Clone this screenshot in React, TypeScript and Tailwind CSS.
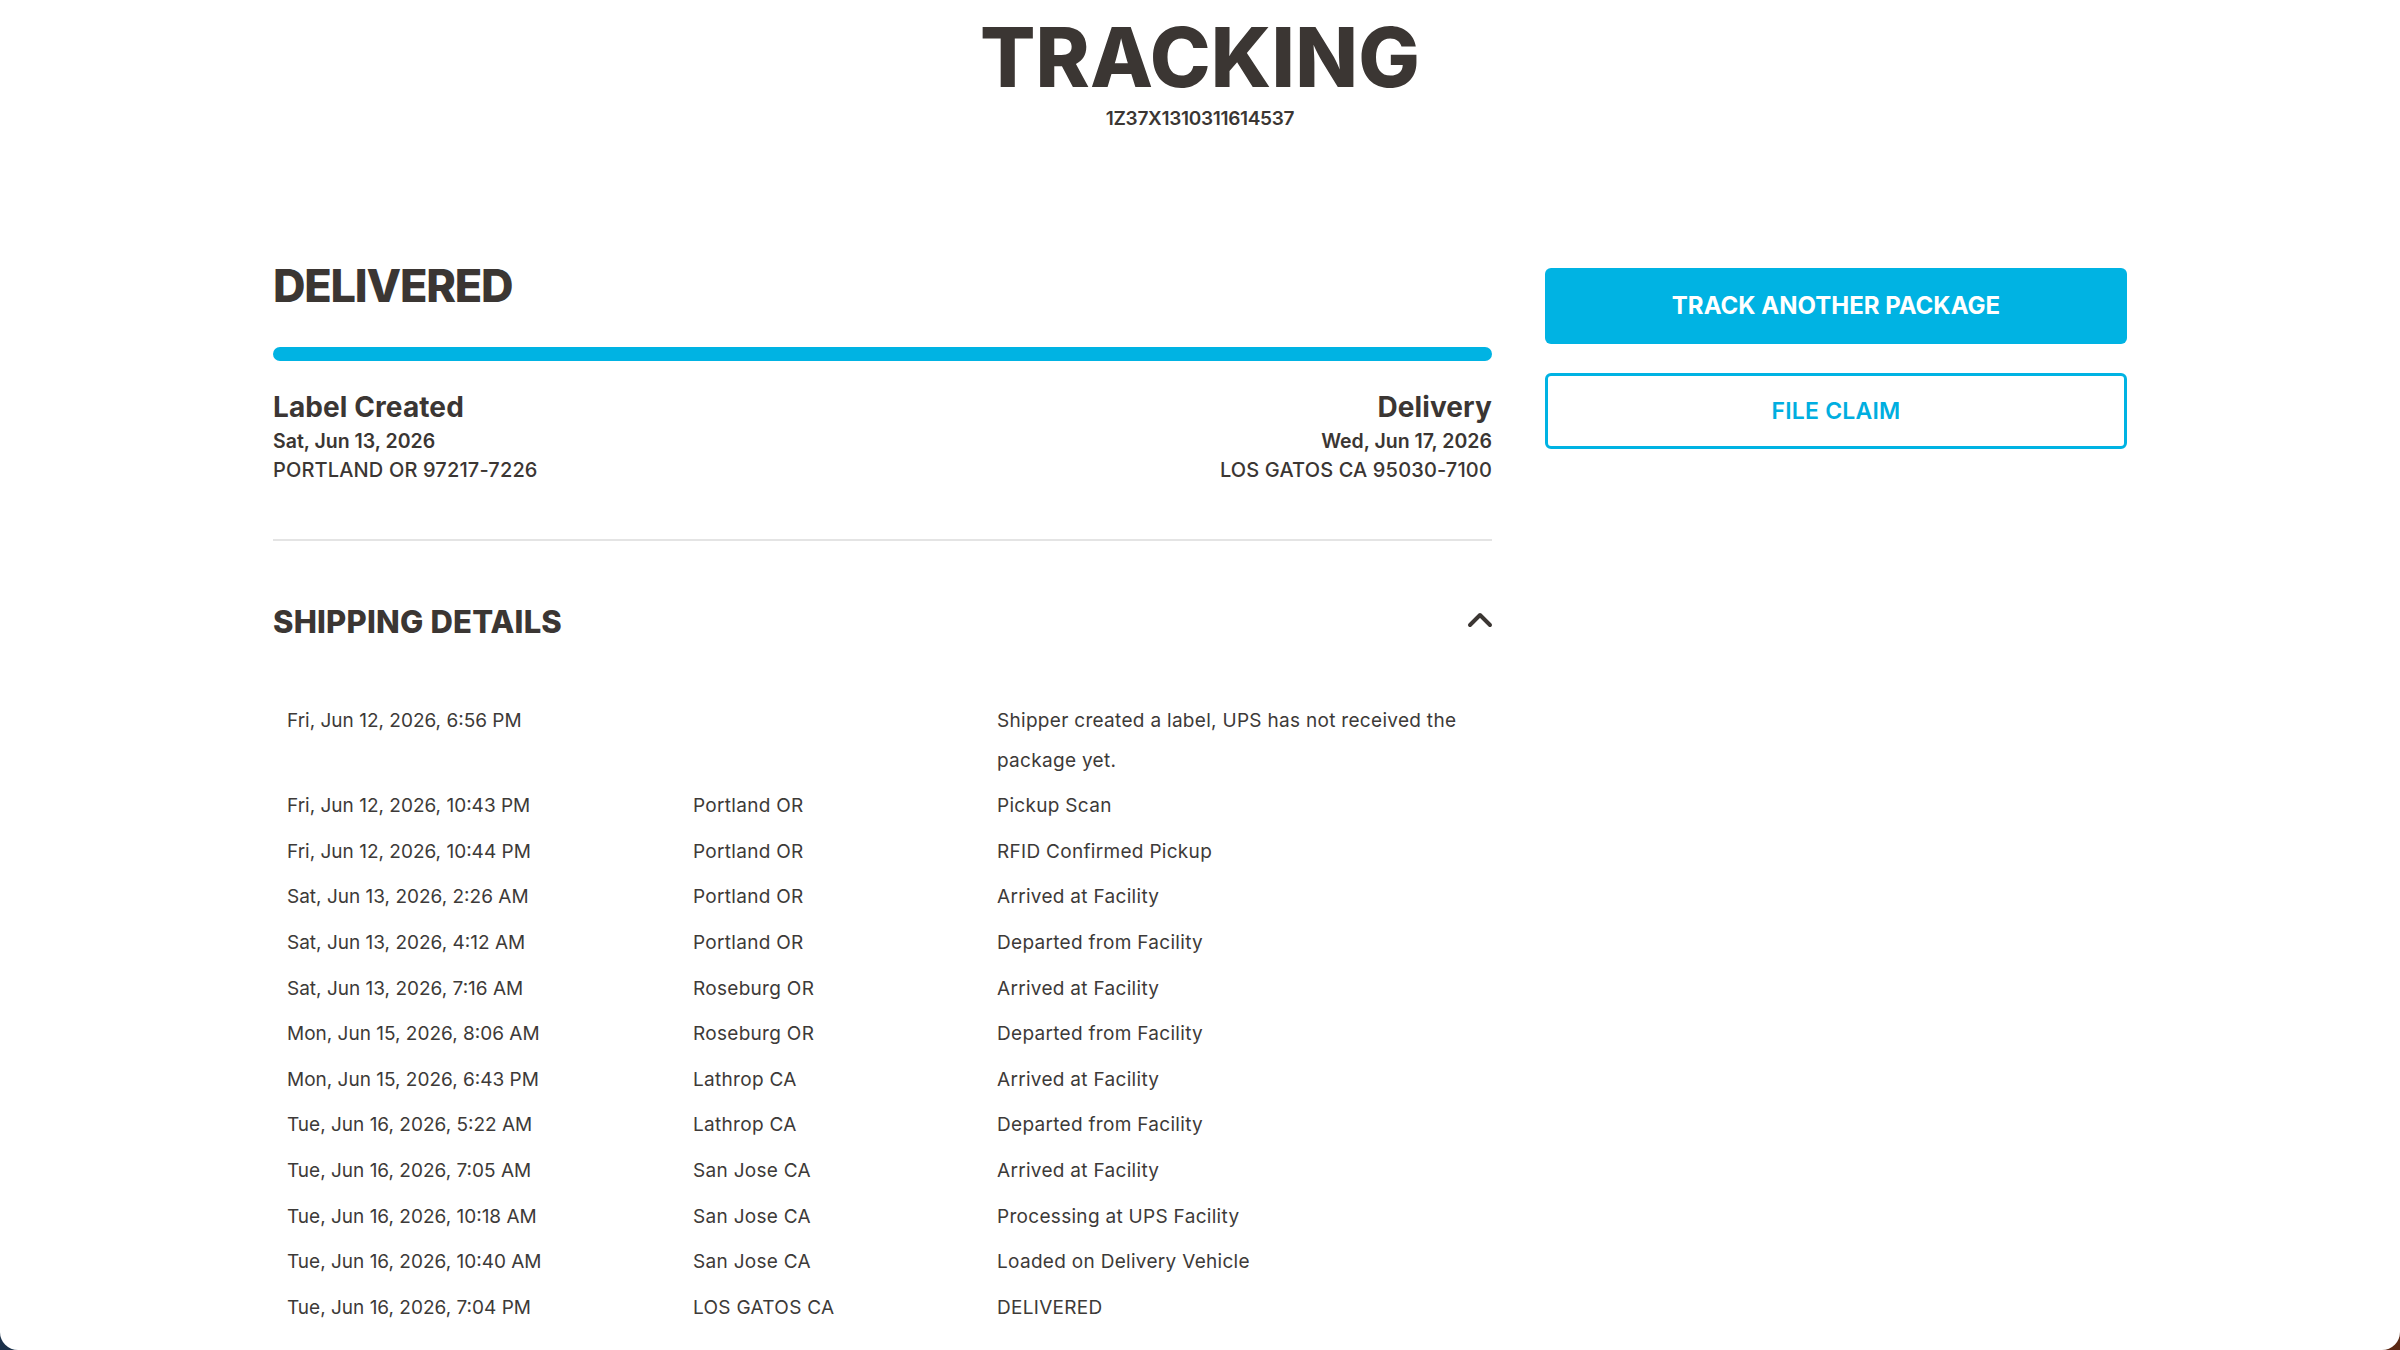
import { ChevronUp } from "lucide-react";

type ActivityRow = {
  date: string;
  location: string;
  status: string;
};

const activity: ActivityRow[] = [
  { date: "Fri, Jun 12, 2026, 6:56 PM", location: "", status: "Shipper created a label, UPS has not received the package yet." },
  { date: "Fri, Jun 12, 2026, 10:43 PM", location: "Portland OR", status: "Pickup Scan" },
  { date: "Fri, Jun 12, 2026, 10:44 PM", location: "Portland OR", status: "RFID Confirmed Pickup" },
  { date: "Sat, Jun 13, 2026, 2:26 AM", location: "Portland OR", status: "Arrived at Facility" },
  { date: "Sat, Jun 13, 2026, 4:12 AM", location: "Portland OR", status: "Departed from Facility" },
  { date: "Sat, Jun 13, 2026, 7:16 AM", location: "Roseburg OR", status: "Arrived at Facility" },
  { date: "Mon, Jun 15, 2026, 8:06 AM", location: "Roseburg OR", status: "Departed from Facility" },
  { date: "Mon, Jun 15, 2026, 6:43 PM", location: "Lathrop CA", status: "Arrived at Facility" },
  { date: "Tue, Jun 16, 2026, 5:22 AM", location: "Lathrop CA", status: "Departed from Facility" },
  { date: "Tue, Jun 16, 2026, 7:05 AM", location: "San Jose CA", status: "Arrived at Facility" },
  { date: "Tue, Jun 16, 2026, 10:18 AM", location: "San Jose CA", status: "Processing at UPS Facility" },
  { date: "Tue, Jun 16, 2026, 10:40 AM", location: "San Jose CA", status: "Loaded on Delivery Vehicle" },
  { date: "Tue, Jun 16, 2026, 7:04 PM", location: "LOS GATOS CA", status: "DELIVERED" },
];

function Milestone({ title, date, place, align }: { title: string; date: string; place: string; align: "left" | "right" }) {
  return (
    <div className={align === "right" ? "text-right" : "text-left"}>
      <div className="text-[28px] font-bold leading-[30px] tracking-[0.1px]">{title}</div>
      <div className="mt-[5px] text-[19.5px] font-semibold leading-[29px]">{date}</div>
      <div className="text-[20px] font-medium leading-[29px] tracking-[0.15px]">{place}</div>
    </div>
  );
}

export default function App() {
  return (
    <div className="bg-gradient-to-r from-[#1b3049] to-[#5b2814]">
      <div
        className="h-[1350px] overflow-hidden rounded-b-[18px] bg-white text-[#3b3633]"
        style={{ fontFamily: "Inter, 'Noto Sans', 'Liberation Sans', sans-serif" }}
      >
        <header className="flex flex-col items-center pt-[18px]">
          <h1 className="text-[82px] font-extrabold uppercase leading-[80px] tracking-[0.2px]">Tracking</h1>
          <div className="mt-[9px] text-[19px] font-semibold leading-[24px] tracking-[-0.3px]">1Z37X1310311614537</div>
        </header>

        <main className="mx-auto mt-[137px] grid w-[1854px] grid-cols-[1219px_582px] gap-x-[53px]">
          <section>
            <h2 className="text-[45px] font-extrabold uppercase leading-[36px] tracking-[-1.2px]">Delivered</h2>
            <div className="mt-[43px] h-[14px] rounded-full bg-[#00b3e3]" />

            <div className="mt-[31px] flex justify-between">
              <Milestone title="Label Created" date="Sat, Jun 13, 2026" place="PORTLAND OR 97217-7226" align="left" />
              <Milestone title="Delivery" date="Wed, Jun 17, 2026" place="LOS GATOS CA 95030-7100" align="right" />
            </div>

            <div className="mt-[54px] h-[2px] bg-[#e4e4e4]" />

            <div className="mt-[62px] flex items-center justify-between">
              <h3 className="text-[31px] font-extrabold uppercase leading-[36px] tracking-[0.2px]">Shipping Details</h3>
              <ChevronUp size={40} strokeWidth={2.4} className="-mr-[8px] -mt-[3px] text-[#3b3633]" />
            </div>

            <div className="mt-[58px] text-[19px] leading-[39.6px] text-[#3d3a38]">
              {activity.map((row) => (
                <div key={row.date} className="grid grid-cols-[406px_304px_1fr] py-[3px]">
                  <div className="px-[14px]">{row.date}</div>
                  <div className="px-[14px] tracking-[0.3px]">{row.location}</div>
                  <div className="px-[14px] tracking-[0.3px]">{row.status}</div>
                </div>
              ))}
            </div>
          </section>

          <aside className="flex flex-col gap-[29px]">
            <button
              type="button"
              className="h-[76px] rounded-[6px] bg-[#00b3e3] text-[24px] font-bold uppercase tracking-[0px] text-white"
            >
              Track Another Package
            </button>
            <button
              type="button"
              className="h-[76px] rounded-[6px] border-[3px] border-[#00b3e3] bg-white text-[23px] font-semibold uppercase tracking-[0.2px] text-[#00aee0]"
            >
              File Claim
            </button>
          </aside>
        </main>
      </div>
    </div>
  );
}
